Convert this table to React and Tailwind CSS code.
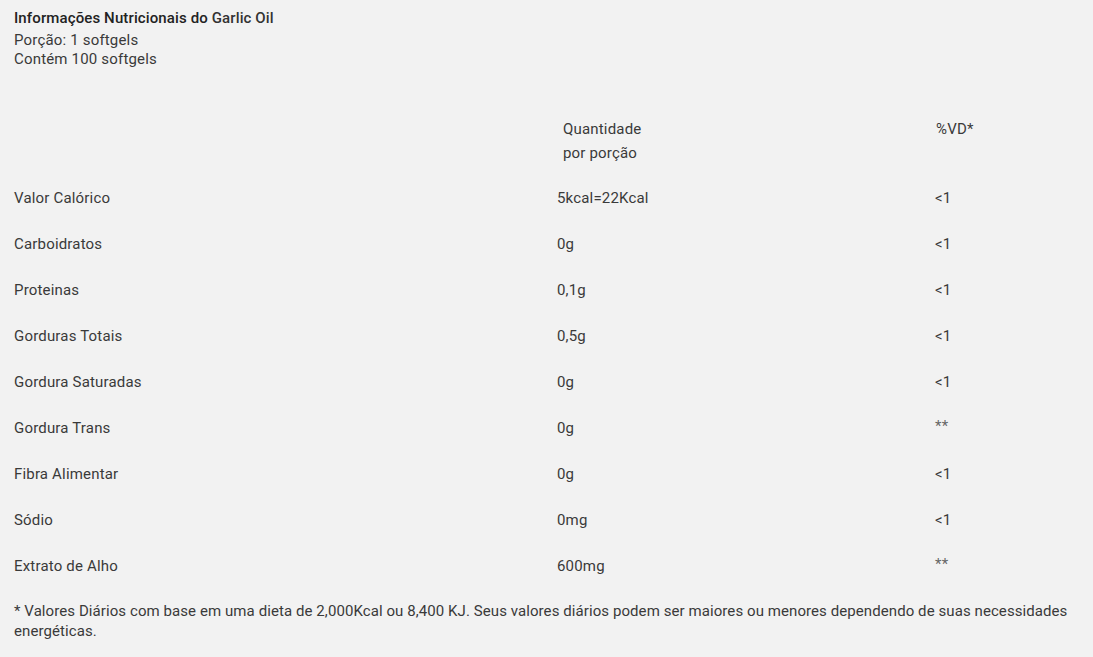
const LINHAS = [
  { nome: "Valor Calórico", qtd: "5kcal=22Kcal", vd: "<1" },
  { nome: "Carboidratos", qtd: "0g", vd: "<1" },
  { nome: "Proteinas", qtd: "0,1g", vd: "<1" },
  { nome: "Gorduras Totais", qtd: "0,5g", vd: "<1" },
  { nome: "Gordura Saturadas", qtd: "0g", vd: "<1" },
  { nome: "Gordura Trans", qtd: "0g", vd: "**" },
  { nome: "Fibra Alimentar", qtd: "0g", vd: "<1" },
  { nome: "Sódio", qtd: "0mg", vd: "<1" },
  { nome: "Extrato de Alho", qtd: "600mg", vd: "**" },
];

export default function App() {
  return (
    <div
      className="min-h-[657px] w-full bg-[#f2f2f2] px-[14px] pt-[8px] text-[15px] tracking-[0.18px] text-[#3a3a3a]"
      style={{ fontFamily: "Roboto, 'Liberation Sans', sans-serif" }}
    >
      {/* Cabeçalho */}
      <h2 className="text-[15px] leading-[20px] font-medium tracking-[0.12px] text-[#222]">
        Informações Nutricionais do <span className="text-[#333]">Garlic Oil</span>
      </h2>
      <p className="mt-[3px] leading-[19px]">Porção: 1 softgels</p>
      <p className="leading-[19px]">Contém 100 softgels</p>

      {/* Tabela */}
      <div className="mt-[48px]">
        <div className="flex leading-[24px]">
          <div className="w-[543px]"></div>
          <div className="w-[378px] pl-[6px]">
            <div>Quantidade</div>
            <div>por porção</div>
          </div>
          <div className="flex-1 pl-[1px]">%VD*</div>
        </div>

        <div className="mt-[10px]">
          {LINHAS.map((l) => (
            <div key={l.nome} className="flex h-[46px] items-center">
              <div className="w-[543px]">{l.nome}</div>
              <div className="w-[378px]">{l.qtd}</div>
              <div className={"flex-1 " + (l.vd === "**" ? "text-[#666] -mt-[4px]" : "")}>{l.vd}</div>
            </div>
          ))}
        </div>
      </div>

      <p className="mt-[12px] leading-[20px] tracking-[0.08px]">
        * Valores Diários com base em uma dieta de 2,000Kcal ou 8,400 KJ. Seus valores diários podem ser maiores ou menores dependendo de suas necessidades energéticas.
      </p>
    </div>
  );
}
